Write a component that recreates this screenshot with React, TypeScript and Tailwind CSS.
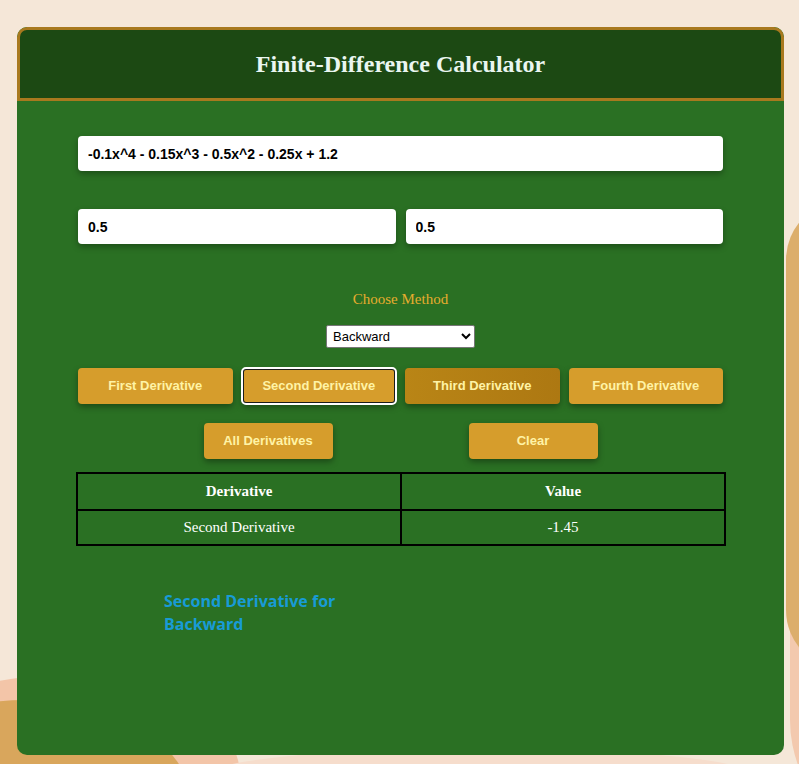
import { useState } from 'react';

const btn =
  'h-9 rounded-[4px] text-[13px] font-bold text-[#fff3a6] shadow-[0_3px_6px_rgba(0,0,0,0.35)] [font-family:"Liberation_Sans",Arial,sans-serif]';

export default function App() {
  const [fn, setFn] = useState('-0.1x^4 - 0.15x^3 - 0.5x^2 - 0.25x + 1.2');
  const [x, setX] = useState('0.5');
  const [h, setH] = useState('0.5');
  const [method, setMethod] = useState('Backward');

  return (
    <div className="relative min-h-[764px] w-full overflow-hidden bg-[#f5e7d8]">
      {/* decorative background blobs */}
      <div className="absolute left-[790px] top-[150px] h-[700px] w-[260px] rounded-full bg-[#f3c9ae]" />
      <div className="absolute left-[786px] top-[200px] h-[470px] w-[120px] rounded-full bg-[#dcae6c]" />
      <div className="absolute -left-[120px] top-[675px] h-[200px] w-[360px] rounded-[50%] bg-[#f3c5a8]" />
      <div className="absolute -left-[140px] top-[700px] h-[200px] w-[330px] rounded-[50%] bg-[#d9a65c]" />
      <div className="absolute left-[200px] top-[748px] h-[60px] w-[560px] rounded-[50%] bg-[#f6ddcc]" />

      <div className="relative pl-[17px] pt-[27px] pb-[9px]">
        <div className="flex h-[728px] w-[767px] flex-col overflow-hidden rounded-[10px] bg-[#2a7023]">
          <div className="flex h-[74px] items-center justify-center rounded-t-[10px] border-[3px] border-[#a8791e] bg-[#1c4913]">
            <h1 className="text-[24px] font-bold text-[#eaf6f1] [font-family:'Liberation_Serif','Times_New_Roman',serif]">
              Finite-Difference Calculator
            </h1>
          </div>

          <div className="flex flex-col px-[61px] pt-[35px]">
            <input
              value={fn}
              onChange={(e) => setFn(e.target.value)}
              className="h-[35px] w-full rounded-[4px] bg-white px-[10px] text-[14px] font-bold text-black shadow-[0_3px_6px_rgba(0,0,0,0.3)] outline-none [font-family:'Liberation_Sans',Arial,sans-serif]"
            />

            <div className="mt-[38px] flex gap-[10px]">
              <input
                value={x}
                onChange={(e) => setX(e.target.value)}
                className="h-[35px] flex-1 rounded-[4px] bg-white px-[10px] text-[14px] font-bold text-black shadow-[0_3px_6px_rgba(0,0,0,0.3)] outline-none [font-family:'Liberation_Sans',Arial,sans-serif]"
              />
              <input
                value={h}
                onChange={(e) => setH(e.target.value)}
                className="h-[35px] flex-1 rounded-[4px] bg-white px-[10px] text-[14px] font-bold text-black shadow-[0_3px_6px_rgba(0,0,0,0.3)] outline-none [font-family:'Liberation_Sans',Arial,sans-serif]"
              />
            </div>

            <p className="mt-[44px] text-center text-[15px] text-[#e6ac2e] [font-family:'Liberation_Serif','Times_New_Roman',serif]">
              Choose Method
            </p>

            <div className="mt-[14px] flex justify-center">
              <select
                value={method}
                onChange={(e) => setMethod(e.target.value)}
                className="h-[23px] w-[149px] rounded-[2px] border border-[#767676] bg-white px-[2px] text-[13px] text-black [font-family:'Liberation_Sans',Arial,sans-serif]"
              >
                <option>Forward</option>
                <option>Backward</option>
                <option>Central</option>
              </select>
            </div>

            <div className="mt-[20px] grid grid-cols-4 gap-[9px]">
              <button className={`${btn} bg-[#d69d2c]`}>First Derivative</button>
              <button className={`${btn} bg-[#d69d2c] outline-2 outline-offset-[-1px] outline-white border-2 border-[#1b1b1b]`}>
                Second Derivative
              </button>
              <button className={`${btn} bg-gradient-to-r from-[#b98516] to-[#ad7812]`}>Third Derivative</button>
              <button className={`${btn} bg-[#d69d2c]`}>Fourth Derivative</button>
            </div>

            <div className="mt-[19px] flex justify-center gap-[136px]">
              <button className={`${btn} w-[129px] bg-[#d69d2c]`}>All Derivatives</button>
              <button className={`${btn} w-[129px] bg-[#d69d2c]`}>Clear</button>
            </div>

            <table className="-ml-[2px] mt-[13px] w-[650px] max-w-none border-collapse text-[15px] text-white [font-family:'Liberation_Serif','Times_New_Roman',serif]">
              <thead>
                <tr className="h-[37px]">
                  <th className="w-1/2 border-2 border-black font-bold">Derivative</th>
                  <th className="w-1/2 border-2 border-black font-bold">Value</th>
                </tr>
              </thead>
              <tbody>
                <tr className="h-[35px]">
                  <td className="border-2 border-black text-center">Second Derivative</td>
                  <td className="border-2 border-black text-center">-1.45</td>
                </tr>
              </tbody>
            </table>

            <p className="ml-[86px] mt-[44px] w-[210px] text-[16px] font-bold leading-[23px] text-[#189bd6] [font-family:'Open_Sans',sans-serif]">
              Second Derivative for Backward
            </p>
          </div>
        </div>
      </div>
    </div>
  );
}
